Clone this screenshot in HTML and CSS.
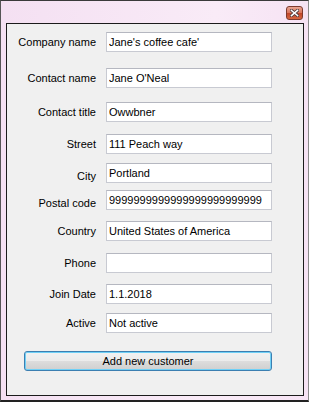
FILE: index.html
```html
<!DOCTYPE html>
<html lang="en">
<head>
    <meta charset="UTF-8">
    <title>Add Customer</title>
    <link rel="stylesheet" href="styles.css">
</head>
<body>
    <div class="window">
        <div class="titlebar">
            <button class="close-btn" type="button" aria-label="Close">
                <svg width="9" height="8" viewBox="0 0 9 8">
                    <path d="M1.5 1.5 L7.5 6.5 M7.5 1.5 L1.5 6.5" stroke="#4a3a3a" stroke-width="3.2" stroke-linecap="square"/>
                    <path d="M1.5 1.5 L7.5 6.5 M7.5 1.5 L1.5 6.5" stroke="#ffffff" stroke-width="1.6" stroke-linecap="square"/>
                </svg>
            </button>
        </div>
        <div class="client">
            <form class="customer-form" id="customerForm">
                <label class="field-label" for="company">Company name</label>
                <input class="field" id="company" type="text" value="Jane's coffee cafe'">

                <label class="field-label" for="contactName">Contact name</label>
                <input class="field" id="contactName" type="text" value="Jane O'Neal">

                <label class="field-label" for="contactTitle">Contact title</label>
                <input class="field" id="contactTitle" type="text" value="Owwbner">

                <label class="field-label" for="street">Street</label>
                <input class="field" id="street" type="text" value="111 Peach way">

                <label class="field-label low" for="city">City</label>
                <input class="field" id="city" type="text" value="Portland">

                <label class="field-label low" for="postalCode">Postal code</label>
                <input class="field" id="postalCode" type="text" value="9999999999999999999999999">

                <label class="field-label" for="country">Country</label>
                <input class="field" id="country" type="text" value="United States of America">

                <label class="field-label" for="phone">Phone</label>
                <input class="field" id="phone" type="text" value="">

                <label class="field-label" for="joinDate">Join Date</label>
                <input class="field" id="joinDate" type="text" value="1.1.2018">

                <label class="field-label" for="active">Active</label>
                <input class="field" id="active" type="text" value="Not active">

                <button class="add-btn" type="submit">Add new customer</button>
            </form>
        </div>
    </div>
</body>
</html>
```

FILE: styles.css
```css
body {
    margin: 0;
    width: 309px;
    height: 402px;
    font-family: "Liberation Sans", Arial, sans-serif;
    font-size: 11px;
    color: #000;
}
.window {
    box-sizing: border-box;
    width: 309px;
    height: 402px;
    display: flex;
    flex-direction: column;
    padding: 0 4px 4px 5px;
    border: 1px solid #555;
    border-top-color: #3a3a3a;
    border-right-color: #8a8a8a;
    border-bottom: 2px solid #222;
    background: linear-gradient(to right, #f4e0f2, #f9ebf7 70%, #f6e3f4);
}
.titlebar {
    box-sizing: border-box;
    height: 22px;
    display: flex;
    justify-content: flex-end;
    align-items: flex-start;
    padding-top: 5px;
}
.close-btn {
    box-sizing: border-box;
    width: 17px;
    height: 14px;
    margin: 0 1px 0 0;
    padding: 0;
    display: flex;
    align-items: center;
    justify-content: center;
    border: 1px solid #7e3a2e;
    border-radius: 3px;
    background: linear-gradient(to bottom, #e8a492, #d8735a 50%, #c0452a 51%, #d5663f);
    cursor: pointer;
}
.client {
    flex: 1;
    border: 1px solid #1b1b1b;
    background-color: #f0f0f0;
}
.customer-form {
    display: grid;
    grid-template-columns: 89px 166px;
    grid-template-rows: 36px 34px 32px 29px 27px 31px 32px 31px 29px 38px 20px;
    column-gap: 10px;
    align-items: start;
    padding-top: 8px;
}
.field-label {
    text-align: right;
    line-height: 13px;
    padding-top: 4px;
    white-space: nowrap;
}
.field-label.low {
    padding-top: 7px;
}
.field {
    box-sizing: border-box;
    width: 166px;
    height: 20px;
    margin: 0;
    padding: 0 2px;
    border: 1px solid #c8cad2;
    border-top-color: #b5b7c0;
    background-color: #fff;
    font-family: inherit;
    font-size: 11px;
    color: #000;
    outline: none;
}
.add-btn {
    grid-column: 1 / 3;
    box-sizing: border-box;
    width: 248px;
    height: 20px;
    margin: 0 0 0 17px;
    padding: 0;
    border: 1px solid #3c7fb1;
    border-radius: 3px;
    box-shadow: inset 0 0 0 1px #6fd0f6;
    background: linear-gradient(to bottom, #f2f2f2, #ebebeb 50%, #dddddd 51%, #cfcfcf);
    font-family: inherit;
    font-size: 11px;
    color: #000;
    cursor: pointer;
}
```
